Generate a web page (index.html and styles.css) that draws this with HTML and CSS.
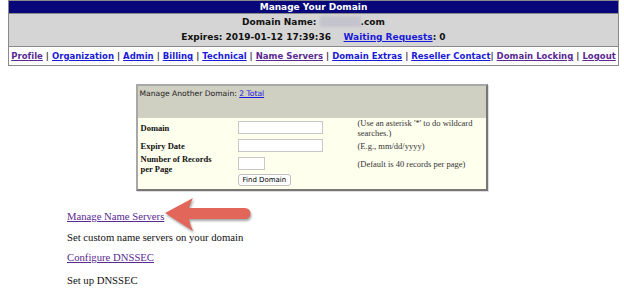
FILE: index.html
```html
<!DOCTYPE html>
<html lang="en">
<head>
  <meta charset="UTF-8">
  <title>Manage Your Domain</title>
  <link rel="stylesheet" href="styles.css">
</head>
<body>

  <table class="manage-head">
    <tr><td class="head-title">Manage Your Domain</td></tr>
    <tr>
      <td class="head-info">
        <div>Domain Name: <span class="blurred"></span>.com</div>
        <div>Expires: 2019-01-12 17:39:36 &nbsp;&nbsp; <a href="#" class="new">Waiting Requests</a>: 0</div>
      </td>
    </tr>
    <tr>
      <td class="head-nav">
        <a href="#">Profile</a> | <a href="#" class="new">Organization</a> | <a href="#" class="new">Admin</a> | <a href="#" class="new">Billing</a> | <a href="#" class="new">Technical</a> | <a href="#">Name Servers</a> | <a href="#" class="new">Domain Extras</a> | <a href="#" class="new">Reseller Contact</a>| <a href="#">Domain Locking</a> | <a href="#">Logout</a>
      </td>
    </tr>
  </table>

  <div class="search-wrap">
    <table class="search-box">
      <tr>
        <td class="search-head" colspan="3">Manage Another Domain: <a href="#" class="new">2 Total</a></td>
      </tr>
      <tr>
        <td class="lbl">Domain</td>
        <td class="fld"><input type="text" class="inp"></td>
        <td class="hint">(Use an asterisk '*' to do wildcard searches.)</td>
      </tr>
      <tr>
        <td class="lbl">Expiry Date</td>
        <td class="fld"><input type="text" class="inp"></td>
        <td class="hint">(E.g., mm/dd/yyyy)</td>
      </tr>
      <tr>
        <td class="lbl">Number of Records<br>per Page</td>
        <td class="fld"><input type="text" class="inp small"></td>
        <td class="hint">(Default is 40 records per page)</td>
      </tr>
      <tr>
        <td class="lbl"></td>
        <td class="fld btn-cell"><button class="find-btn">Find Domain</button></td>
        <td class="hint"></td>
      </tr>
    </table>
  </div>

  <div class="links">
    <p><a href="#">Manage Name Servers</a></p>
    <p class="tight">Set custom name servers on your domain</p>
    <p><a href="#">Configure DNSSEC</a></p>
    <p>Set up DNSSEC</p>
  </div>

  <svg class="arrow" width="100" height="40" viewBox="0 0 100 40">
    <path d="M5,18 L33,3 Q30,9 29,13 L85,13 A5.5,5.5 0 0 1 85,24 L29,24 Q30,30 33,36 Z" fill="#e2665a"/>
  </svg>

</body>
</html>
```

FILE: styles.css
```css
* { box-sizing: border-box; }

body {
  margin: 0 5px 0 8px;
  background: #fff;
  font-family: "Liberation Serif", serif;
  position: relative;
}

/* header block */
.manage-head {
  width: 100%;
  border-collapse: collapse;
  border: 1px solid #8a8a8a;
  font-family: "DejaVu Sans", Verdana, sans-serif;
  font-weight: bold;
  font-size: 9px;
}
.manage-head td { padding: 0; text-align: center; }

.head-title {
  background: #07077a;
  color: #fff;
  height: 13px;
  border-bottom: 1px solid #8a8a8a;
}

.head-info {
  background: #d5d5d5;
  height: 33px;
  line-height: 15px;
  color: #111;
  border-bottom: 1px solid #8a8a8a;
}

.blurred {
  display: inline-block;
  width: 41px; height: 11px;
  vertical-align: -2px;
  background: #c4c4cc;
  filter: blur(1px);
}

.head-nav {
  height: 19px;
  color: #333;
  font-size: 8.5px;
  white-space: nowrap;
  letter-spacing: 0.02px;
}

a { color: #5a2a92; }
a.new { color: #1a1ad8; }

/* search form */
.search-wrap {
  display: flex;
  justify-content: center;
  padding: 18px 4px 0 0;
}

.search-box {
  width: 352px;
  border-collapse: separate;
  border-spacing: 0;
  border: 2px solid #a8a8a8;
  border-right-color: #777;
  border-bottom-color: #777;
  box-shadow: 1px 1px 0 #ddd;
  background: #ffffee;
  font-size: 8.5px;
}

.search-box td { padding-top: 0; padding-bottom: 0; line-height: 10px; }

.search-box td.search-head {
  background: #cfcfc2;
  height: 32px;
  vertical-align: top;
  padding: 3px 2px;
  font-family: "DejaVu Sans", Verdana, sans-serif;
  font-size: 7.6px;
  color: #222;
}

.lbl {
  width: 100px;
  padding-left: 3px;
  font-weight: bold;
  font-size: 8.5px;
  color: #111;
}
.fld { width: 119px; padding-left: 0; }
.hint { color: #333; font-size: 8.5px; padding-right: 4px; }

.inp {
  display: block;
  width: 85px;
  height: 13px;
  border: 1px solid #c8c8c8;
  background: #fff;
  margin: 1px 0 2px 0;
}
.inp.small { width: 27px; }

.search-box td.btn-cell { padding-bottom: 3px; }

.find-btn {
  display: block;
  font-family: "DejaVu Sans", Verdana, sans-serif;
  font-size: 7px;
  background: #fdfdfd;
  border: 1px solid #c0c0c0;
  border-radius: 3px;
  padding: 0 4px;
  height: 12px;
}

/* lower links */
.links {
  padding: 18px 0 0 59px;
  font-size: 10.7px;
  color: #111;
}
.links p { margin: 0 0 9px 0; line-height: 14px; }
.links p:first-child { margin-bottom: 7px; }
.links p.tight { margin-bottom: 6px; }

.arrow {
  position: absolute;
  left: 152px;
  top: 195px;
  filter: drop-shadow(1px 2px 1px rgba(0,0,0,0.35));
}
```
